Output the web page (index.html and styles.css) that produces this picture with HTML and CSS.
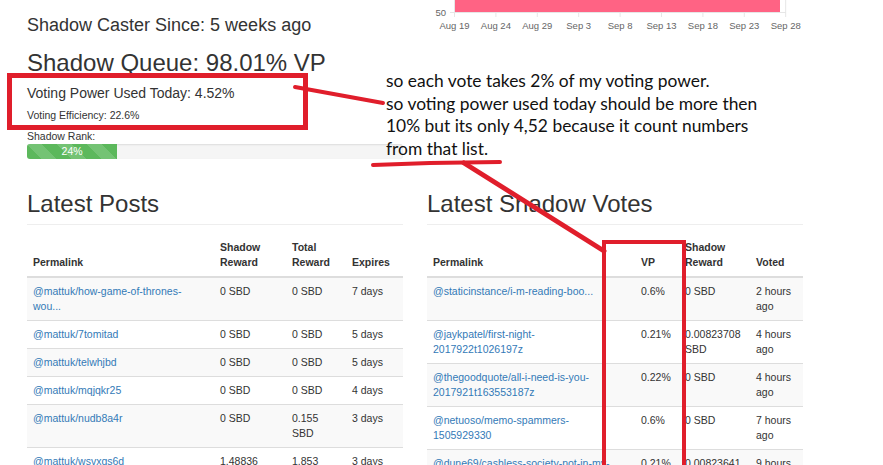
FILE: index.html
```html
<!DOCTYPE html>
<html lang="en">
<head>
    <meta charset="UTF-8">
    <meta name="viewport" content="width=device-width, initial-scale=1.0">
    <title>Shadow Caster</title>
    <link rel="stylesheet" href="styles.css">
</head>
<body>
    <div class="page">
        <div class="stats">
            <h4 class="since">Shadow Caster Since: 5 weeks ago</h4>
            <h3 class="queue">Shadow Queue: 98.01% VP</h3>
            <p class="vp-used">Voting Power Used Today: 4.52%</p>
            <p class="efficiency">Voting Efficiency: 22.6%</p>
            <p class="rank-label">Shadow Rank:</p>
            <div class="progress">
                <div class="progress-bar" style="width: 24%">24%</div>
            </div>
        </div>

        <div class="chart">
            <svg width="376" height="34" viewBox="0 0 376 34">
                <g stroke="#e6e6e6" stroke-width="1">
                    <line x1="27.5" y1="0" x2="27.5" y2="17"/>
                    <line x1="68.9" y1="0" x2="68.9" y2="17"/>
                    <line x1="110.3" y1="0" x2="110.3" y2="17"/>
                    <line x1="151.7" y1="0" x2="151.7" y2="17"/>
                    <line x1="193.1" y1="0" x2="193.1" y2="17"/>
                    <line x1="234.5" y1="0" x2="234.5" y2="17"/>
                    <line x1="275.9" y1="0" x2="275.9" y2="17"/>
                    <line x1="317.3" y1="0" x2="317.3" y2="17"/>
                    <line x1="358.7" y1="0" x2="358.7" y2="17"/>
                    <line x1="23" y1="12.5" x2="359" y2="12.5"/>
                </g>
                <rect x="28" y="0" width="325" height="12" fill="#ff6384"/>
                <text class="tick" x="19" y="16" text-anchor="end">50</text>
                <g class="tick" text-anchor="middle">
                    <text x="27.5" y="29">Aug 19</text>
                    <text x="68.9" y="29">Aug 24</text>
                    <text x="110.3" y="29">Aug 29</text>
                    <text x="151.7" y="29">Sep 3</text>
                    <text x="193.1" y="29">Sep 8</text>
                    <text x="234.5" y="29">Sep 13</text>
                    <text x="275.9" y="29">Sep 18</text>
                    <text x="317.3" y="29">Sep 23</text>
                    <text x="358.7" y="29">Sep 28</text>
                </g>
            </svg>
        </div>

        <div class="posts">
            <h2 class="page-header">Latest Posts</h2>
            <table class="table">
                <colgroup>
                    <col style="width: 187px">
                    <col style="width: 72px">
                    <col style="width: 60px">
                    <col style="width: 57px">
                </colgroup>
                <thead>
                    <tr>
                        <th>Permalink</th>
                        <th>Shadow Reward</th>
                        <th>Total Reward</th>
                        <th>Expires</th>
                    </tr>
                </thead>
                <tbody>
                    <tr>
                        <td><a href="#">@mattuk/how-game-of-thrones-wou...</a></td>
                        <td>0 SBD</td>
                        <td>0 SBD</td>
                        <td>7 days</td>
                    </tr>
                    <tr>
                        <td><a href="#">@mattuk/7tomitad</a></td>
                        <td>0 SBD</td>
                        <td>0 SBD</td>
                        <td>5 days</td>
                    </tr>
                    <tr>
                        <td><a href="#">@mattuk/telwhjbd</a></td>
                        <td>0 SBD</td>
                        <td>0 SBD</td>
                        <td>5 days</td>
                    </tr>
                    <tr>
                        <td><a href="#">@mattuk/mqjqkr25</a></td>
                        <td>0 SBD</td>
                        <td>0 SBD</td>
                        <td>4 days</td>
                    </tr>
                    <tr>
                        <td><a href="#">@mattuk/nudb8a4r</a></td>
                        <td>0 SBD</td>
                        <td>0.155 SBD</td>
                        <td>3 days</td>
                    </tr>
                    <tr>
                        <td><a href="#">@mattuk/wsvxqs6d</a></td>
                        <td>1.48836</td>
                        <td>1.853</td>
                        <td>3 days</td>
                    </tr>
                </tbody>
            </table>
        </div>

        <div class="votes">
            <h2 class="page-header">Latest Shadow Votes</h2>
            <table class="table">
                <colgroup>
                    <col style="width: 208px">
                    <col style="width: 44px">
                    <col style="width: 71px">
                    <col style="width: 53px">
                </colgroup>
                <thead>
                    <tr>
                        <th>Permalink</th>
                        <th>VP</th>
                        <th>Shadow Reward</th>
                        <th>Voted</th>
                    </tr>
                </thead>
                <tbody>
                    <tr>
                        <td class="link"><a href="#">@staticinstance/i-m-reading-boo...</a></td>
                        <td>0.6%</td>
                        <td>0 SBD</td>
                        <td>2 hours ago</td>
                    </tr>
                    <tr>
                        <td class="link"><a href="#">@jaykpatel/first-night-2017922t1026197z</a></td>
                        <td>0.21%</td>
                        <td>0.00823708 SBD</td>
                        <td>4 hours ago</td>
                    </tr>
                    <tr>
                        <td class="link"><a href="#">@thegoodquote/all-i-need-is-you-2017921t163553187z</a></td>
                        <td>0.22%</td>
                        <td>0 SBD</td>
                        <td>4 hours ago</td>
                    </tr>
                    <tr>
                        <td class="link"><a href="#">@netuoso/memo-spammers-1505929330</a></td>
                        <td>0.6%</td>
                        <td>0 SBD</td>
                        <td>7 hours ago</td>
                    </tr>
                    <tr>
                        <td class="link"><a href="#">@dune69/cashless-society-not-in-my-lifetime</a></td>
                        <td>0.21%</td>
                        <td>0.00823641 SBD</td>
                        <td>9 hours ago</td>
                    </tr>
                </tbody>
            </table>
        </div>
    </div>

    <!-- hand drawn notes on top of the screenshot -->
    <svg class="marks" width="883" height="465" viewBox="0 0 883 465">
        <g fill="none" stroke="#e01e2b" stroke-linecap="round">
            <rect x="9.5" y="75.5" width="296" height="52" stroke-width="5" stroke-linecap="butt"/>
            <rect x="604" y="242" width="80" height="260" stroke-width="4" stroke-linecap="butt"/>
            <path d="M295 87 L383 103" stroke-width="4"/>
            <path d="M373 165 L430 163 L500 162" stroke-width="4"/>
            <path d="M464 163 L604 251" stroke-width="5"/>
        </g>
    </svg>
    <div class="note">
        so each vote takes 2% of my voting power.<br>
        so voting power used today should be more then<br>
        10% but its only 4,52 because it count numbers<br>
        from that list.
    </div>
</body>
</html>
```

FILE: styles.css
```css
* {
    margin: 0;
    padding: 0;
    box-sizing: border-box;
}
body {
    position: relative;
    width: 883px;
    height: 465px;
    overflow: hidden;
    background: #fff;
    color: #333;
    font-family: "Liberation Sans", Arial, sans-serif;
}
a {
    color: #337ab7;
    text-decoration: none;
}
.page {
    display: grid;
    grid-template-columns: 376px 376px;
    column-gap: 24px;
    padding-left: 27px;
}

/* stats */
.since {
    margin-top: 15px;
    font-size: 18px;
    line-height: 20px;
    font-weight: normal;
}
.queue {
    margin-top: 15px;
    font-size: 24px;
    line-height: 26px;
    font-weight: normal;
}
.vp-used {
    margin-top: 9px;
    font-size: 14px;
    line-height: 16px;
}
.efficiency {
    margin-top: 7px;
    font-size: 10.5px;
    line-height: 15px;
}
.rank-label {
    margin-top: 6px;
    font-size: 10.5px;
    line-height: 15px;
}
.progress {
    height: 15px;
    background: #f5f5f5;
    border-radius: 3px;
    box-shadow: inset 0 1px 2px rgba(0, 0, 0, .1);
    overflow: hidden;
}
.progress-bar {
    height: 100%;
    background-color: #5cb85c;
    background-image: linear-gradient(45deg, rgba(255, 255, 255, .15) 25%, transparent 25%, transparent 50%, rgba(255, 255, 255, .15) 50%, rgba(255, 255, 255, .15) 75%, transparent 75%, transparent);
    background-size: 30px 30px;
    color: #fff;
    font-size: 10.5px;
    line-height: 15px;
    text-align: center;
}

/* chart */
.chart svg {
    display: block;
}
.tick {
    font-family: "Liberation Sans", Arial, sans-serif;
    font-size: 9.5px;
    fill: #666;
}

/* tables */
.page-header {
    margin-top: 32px;
    padding-bottom: 7px;
    border-bottom: 1px solid #eee;
    font-size: 24px;
    line-height: 26px;
    font-weight: normal;
}
.table {
    width: 100%;
    margin-top: 9px;
    border-collapse: collapse;
    table-layout: fixed;
    font-size: 10.5px;
    line-height: 15px;
}
.table th,
.table td {
    padding: 6px;
    text-align: left;
    vertical-align: top;
}
.table th {
    vertical-align: bottom;
    border-bottom: 2px solid #ddd;
}
.table td {
    border-top: 1px solid #ddd;
}
.table tbody tr:nth-child(odd) td {
    background: #f9f9f9;
}
.table td.link {
    padding-right: 14px;
}

/* annotations */
.marks {
    position: absolute;
    top: 0;
    left: 0;
    pointer-events: none;
}
.note {
    position: absolute;
    top: 70px;
    left: 386px;
    font-family: Lato, "Open Sans", sans-serif;
    font-size: 17.4px;
    line-height: 22.5px;
    color: #111;
    white-space: nowrap;
}
```
